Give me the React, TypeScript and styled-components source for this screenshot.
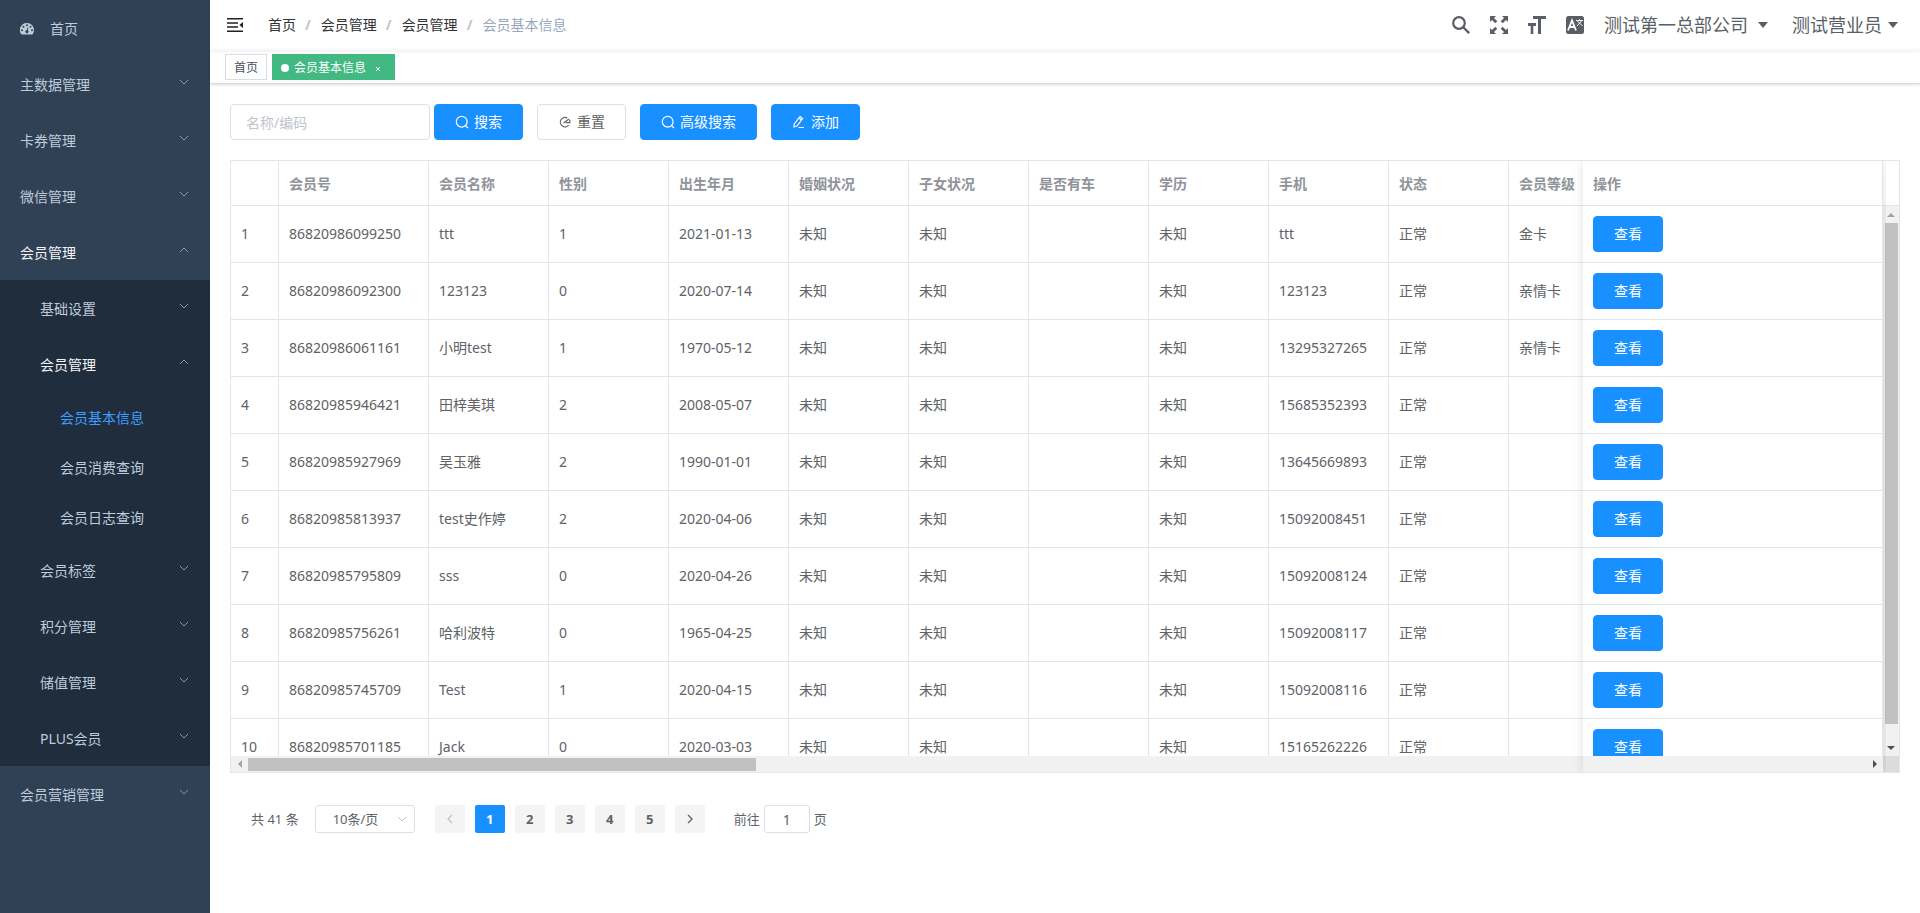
import React, { useRef } from "react";
import styled, { createGlobalStyle, css } from "styled-components";

const GlobalStyle = createGlobalStyle`
  *, *::before, *::after { box-sizing: border-box; }
  body {
    margin: 0;
    background: #fff;
    color: #606266;
    font-family: "Noto Sans", "Noto Sans CJK SC", sans-serif;
    font-size: 14px;
    line-height: 20px;
  }
  button, input, select { font: inherit; color: inherit; }
  a { color: inherit; text-decoration: none; }
`;

const Page = styled.div`
  display: flex;
  min-height: 100vh;
`;

/* ---------- sidebar ---------- */

const Sidebar = styled.nav`
  flex: 0 0 210px;
  background: #304156;
`;

const MenuList = styled.ul<{ $nested?: boolean }>`
  list-style: none;
  margin: 0;
  padding: 0;
  background: ${(p) => (p.$nested ? "#1f2d3d" : "transparent")};
`;

const MenuLink = styled.a<{ $depth: number; $open?: boolean; $active?: boolean }>`
  display: flex;
  align-items: center;
  justify-content: space-between;
  height: ${(p) => (p.$depth === 2 ? 50 : 56)}px;
  padding: 0 20px 0 ${(p) => 20 + p.$depth * 20}px;
  color: ${(p) => (p.$active ? "#409eff" : p.$open ? "#f4f4f5" : "#bfcbd9")};
`;

const MenuLabel = styled.span`
  display: flex;
  align-items: center;
  gap: 16px;
  padding-top: 2px;
`;

const Arrow = styled.svg<{ $up?: boolean }>`
  width: 10px;
  height: 6px;
  margin: 0 1px 4px;
  fill: none;
  stroke: #8c97a5;
  transform: ${(p) => (p.$up ? "rotate(180deg)" : "none")};
`;

const Chevron = ({ up }: { up?: boolean }) => (
  <Arrow $up={up} viewBox="0 0 10 6" aria-hidden="true">
    <path d="M1 1 L5 5 L9 1" />
  </Arrow>
);

/* ---------- top bars ---------- */

const Main = styled.main`
  flex: 1;
  min-width: 0;
`;

const Navbar = styled.header`
  display: flex;
  align-items: center;
  justify-content: space-between;
  height: 50px;
  padding: 0 22px 0 17px;
  box-shadow: 0 1px 4px rgba(0, 21, 41, 0.08);
`;

const NavGroup = styled.div`
  display: flex;
  align-items: center;
`;

const IconButton = styled.button`
  display: flex;
  padding: 0;
  border: 0;
  background: none;
  color: #5a5e66;
  cursor: pointer;
  svg { fill: currentColor; }
`;

const Breadcrumb = styled.ol`
  display: flex;
  list-style: none;
  margin: 0 0 0 25px;
  padding: 0;
  color: #303133;
  li + li::before {
    content: "/";
    margin: 0 10px 0 9px;
    font-weight: 700;
    color: #c0c4cc;
  }
  li:last-child { color: #97a8be; }
`;

const Tools = styled.div`
  display: flex;
  align-items: center;
  gap: 20px;
`;

const AccountButton = styled.button`
  display: flex;
  align-items: center;
  gap: 10px;
  padding: 0;
  border: 0;
  background: none;
  color: #5a5e66;
  font-size: 18px;
  line-height: 26px;
  cursor: pointer;
  & + & { margin-left: 4px; gap: 6px; }
`;

const Caret = styled.span`
  border: 5px solid transparent;
  border-top: 6px solid #5a5e66;
  border-bottom: 0;
`;

const TagsBar = styled.div`
  display: flex;
  gap: 5px;
  height: 34px;
  padding: 4px 15px 0;
  border-bottom: 1px solid #d8dce5;
  box-shadow: 0 1px 3px rgba(0, 0, 0, 0.12), 0 0 3px rgba(0, 0, 0, 0.04);
`;

const Tag = styled.a<{ $active?: boolean }>`
  display: flex;
  align-items: center;
  height: 26px;
  padding: 2px 8px 0;
  border: 1px solid #d8dce5;
  font-size: 12px;
  color: #495060;
  ${(p) =>
    p.$active &&
    css`
      color: #fff;
      background: #42b983;
      border-color: #42b983;
    `}
`;

const Dot = styled.span`
  width: 8px;
  height: 8px;
  margin-right: 5px;
  border-radius: 50%;
  background: #fff;
`;

const CloseButton = styled.button`
  display: flex;
  padding: 5px;
  margin: 2px 0 0 4px;
  border: 0;
  background: none;
  svg { stroke: #fff; }
`;

/* ---------- content ---------- */

const Content = styled.div`
  padding: 20px;
`;

const Toolbar = styled.form`
  display: flex;
  gap: 14px;
  margin-bottom: 20px;
`;

const SearchGroup = styled.div`
  display: flex;
  gap: 4px;
`;

const SearchInput = styled.input`
  width: 200px;
  height: 36px;
  padding: 0 15px;
  border: 1px solid #dcdfe6;
  border-radius: 4px;
  &::placeholder { color: #c0c4cc; }
`;

const Button = styled.button<{ $plain?: boolean }>`
  display: flex;
  align-items: center;
  justify-content: center;
  gap: 5px;
  height: 36px;
  padding: 0 20px;
  border: 1px solid ${(p) => (p.$plain ? "#dcdfe6" : "#1890ff")};
  border-radius: 4px;
  background: ${(p) => (p.$plain ? "#fff" : "#1890ff")};
  color: ${(p) => (p.$plain ? "#606266" : "#fff")};
  cursor: pointer;
  svg { fill: none; stroke: currentColor; stroke-width: 1.2; }
`;

const TableFrame = styled.div`
  position: relative;
  display: grid;
  grid-template-columns: minmax(0, 1fr) 16px;
  grid-template-rows: 45px calc(100vh - 363px) 16px;
  border: 1px solid #dfe6ec;
`;

const TableScroll = styled.div`
  grid-row: 1 / 3;
  overflow: auto;
  scrollbar-width: none;
`;

const DataTable = styled.table`
  table-layout: fixed;
  width: 100%;
  min-width: 1698px;
  border-collapse: separate;
  border-spacing: 0;
`;

const cell = css`
  padding: 0 10px;
  border-right: 1px solid #dfe6ec;
  border-bottom: 1px solid #dfe6ec;
  background: #fff;
  text-align: left;
  white-space: nowrap;
`;

const HeadCell = styled.th<{ $fixed?: boolean }>`
  ${cell}
  position: sticky;
  top: 0;
  ${(p) => p.$fixed && "right: 0;"}
  z-index: ${(p) => (p.$fixed ? 4 : 1)};
  height: 45px;
  padding-top: 2px;
  font-weight: 700;
  color: #909399;
`;

const Cell = styled.td<{ $fixed?: boolean }>`
  ${cell}
  height: 57px;
  ${(p) =>
    p.$fixed &&
    css`
      position: sticky;
      right: 0;
    `}
`;

const FixedShadow = styled.div`
  position: absolute;
  z-index: 3;
  top: 0;
  bottom: 0;
  right: 16px;
  width: 300px;
  box-shadow: 0 0 10px rgba(0, 0, 0, 0.12);
  clip-path: inset(0 -3px 0 -12px);
  pointer-events: none;
`;

const Gutter = styled.div`
  border-bottom: 1px solid #dfe6ec;
`;

const ScrollBar = styled.div<{ $vertical?: boolean }>`
  display: flex;
  flex-direction: ${(p) => (p.$vertical ? "column" : "row")};
  background: #f1f1f1;
`;

const ScrollArrow = styled.button`
  display: flex;
  flex: 0 0 17px;
  align-items: center;
  justify-content: center;
  padding: 0;
  border: 0;
  background: none;
`;

const Track = styled.div`
  flex: 1;
  min-height: 0;
`;

const Thumb = styled.div<{ $vertical?: boolean; $share: number }>`
  background: #c1c1c1;
  ${(p) =>
    p.$vertical
      ? css`height: ${p.$share}%; margin: 0 1px 0 2px;`
      : css`width: ${p.$share}%; height: 13px; margin-top: 2px;`}
`;

const Corner = styled.div`
  background: #dcdcdc;
`;

/* ---------- pagination ---------- */

const Pager = styled.div`
  display: flex;
  align-items: center;
  padding: 32px 21px;
  font-size: 13px;
`;

const SizeSelect = styled.span`
  display: flex;
  align-items: center;
  width: 100px;
  margin: 0 20px 0 16px;
  svg { flex: none; margin: 0 0 0 -18px; stroke: #c0c4cc; pointer-events: none; }
  select {
    appearance: none;
    flex: none;
    width: 100px;
    height: 28px;
    padding: 0 25px 0 17px;
    border: 1px solid #dcdfe6;
    border-radius: 3px;
    background: #fff;
  }
`;

const PageList = styled.div`
  display: flex;
  gap: 10px;
`;

const PageButton = styled.button<{ $active?: boolean }>`
  display: flex;
  align-items: center;
  justify-content: center;
  width: 30px;
  height: 28px;
  padding: 0;
  border: 0;
  border-radius: 2px;
  font-weight: 700;
  background: ${(p) => (p.$active ? "#1890ff" : "#f4f4f5")};
  color: ${(p) => (p.$active ? "#fff" : "#606266")};
  &:disabled { color: #c0c4cc; }
  svg { fill: none; stroke: currentColor; }
`;

const Jumper = styled.label`
  display: flex;
  align-items: center;
  gap: 4px;
  margin-left: 29px;
  input {
    width: 46px;
    height: 28px;
    padding: 0;
    border: 1px solid #dcdfe6;
    border-radius: 3px;
    font-size: 14px;
    text-align: center;
  }
`;

/* ---------- icons ---------- */

const DashboardIcon = () => (
  <svg width="14" height="12" viewBox="0 0 14 12" aria-hidden="true">
    <path
      fill="#bfcbd9"
      fillRule="evenodd"
      d="M7 0a7 7 0 0 1 7 7c0 1.5-.4 2.9-1.2 4.1-.2.3-.4.4-.7.4H1.9c-.3 0-.5-.1-.7-.4A7 7 0 0 1 7 0ZM7 1.2a1 1 0 1 0 0 2 1 1 0 0 0 0-2ZM3.5 2.7a1 1 0 1 0 0 2 1 1 0 0 0 0-2ZM2 6.2a1 1 0 1 0 0 2 1 1 0 0 0 0-2ZM12 6.2a1 1 0 1 0 0 2 1 1 0 0 0 0-2ZM10.5 2.7a1 1 0 1 0 0 2 1 1 0 0 0 0-2ZM7.5 4.5 6.8 7.3a1.5 1.5 0 1 0 1 .3L8.4 4.8Z"
    />
  </svg>
);

const FoldIcon = () => (
  <svg width="16" height="14" viewBox="0 0 16 14" aria-hidden="true">
    <path fill="#222" d="M0 0H16V1.5H0ZM0 4.2H11V5.7H0ZM0 8.2H11V9.7H0ZM0 12.5H16V14H0ZM16 4V10L12.4 7Z" />
  </svg>
);

const SearchIcon = () => (
  <svg width="18" height="18" viewBox="0 0 18 18" aria-hidden="true">
    <circle cx="7" cy="7" r="5.8" fill="none" stroke="currentColor" strokeWidth="2.2" />
    <path d="M10.5 12 12 10.5 18 16.3 16.3 18Z" />
  </svg>
);

const FullscreenIcon = () => (
  <svg width="18" height="18" viewBox="0 0 18 18" aria-hidden="true">
    <path d="M0 0H6L4 2 7.3 5.3 5.3 7.3 2 4 0 6ZM18 0V6L16 4 12.7 7.3 10.7 5.3 14 2 12 0ZM0 18V12L2 14 5.3 10.7 7.3 12.7 4 16 6 18ZM18 18H12L14 16 10.7 12.7 12.7 10.7 16 14 18 12Z" />
  </svg>
);

const SizeIcon = () => (
  <svg width="18" height="18" viewBox="0 0 18 18" aria-hidden="true">
    <path d="M5 0H18V3H13V18H10V3H5ZM0 7H8V10H5.3V18H2.7V10H0Z" />
  </svg>
);

const LanguageIcon = () => (
  <svg width="18" height="18" viewBox="0 0 18 18" aria-hidden="true">
    <rect width="18" height="18" rx="2.5" />
    <path d="M2 14.5 6 4.5 10 14.5M3.5 11H8.5" fill="none" stroke="#fff" strokeWidth="1.8" />
    <path d="M10 4.5H17M13.5 3.2V4.5M11 10 15.5 5M11.5 5 16.5 10" fill="none" stroke="#fff" strokeWidth="0.9" />
  </svg>
);

const SmallSearchIcon = () => (
  <svg width="14" height="14" viewBox="0 0 14 14" aria-hidden="true">
    <circle cx="6.7" cy="6.7" r="5.4" />
    <path d="M10.4 10.4 13 13" />
  </svg>
);

const ResetIcon = () => (
  <svg width="14" height="14" viewBox="0 0 14 14" aria-hidden="true">
    <path d="M10.8 10A4.7 4.7 0 1 1 9.2 3M5.6 8 11 4M7.8 7.6H11.8V4.8" />
  </svg>
);

const EditIcon = () => (
  <svg width="14" height="14" viewBox="0 0 14 14" aria-hidden="true">
    <path d="M8 1.5 10.5 3.5 5 11 2 12 2.3 9ZM7 3 9.5 5M6.5 12.5H12" />
  </svg>
);

const PageArrow = ({ next }: { next?: boolean }) => (
  <svg width="8" height="12" viewBox="0 0 8 12" aria-hidden="true">
    <path d={next ? "M2 2 6 6 2 10" : "M6 2 2 6 6 10"} strokeWidth="1.3" />
  </svg>
);

const Triangle = ({ points, muted }: { points: string; muted?: boolean }) => (
  <svg width="8" height="8" viewBox="0 0 8 8" aria-hidden="true">
    <polygon points={points} fill={muted ? "#a3a3a3" : "#505050"} />
  </svg>
);

/* ---------- data ---------- */

type MenuEntry = { label: string; active?: boolean; icon?: boolean; children?: MenuEntry[]; leaf?: boolean };

const menu: MenuEntry[] = [
  { label: "首页", icon: true, leaf: true },
  { label: "主数据管理" },
  { label: "卡券管理" },
  { label: "微信管理" },
  {
    label: "会员管理",
    children: [
      { label: "基础设置" },
      {
        label: "会员管理",
        children: [
          { label: "会员基本信息", active: true, leaf: true },
          { label: "会员消费查询", leaf: true },
          { label: "会员日志查询", leaf: true },
        ],
      },
      { label: "会员标签" },
      { label: "积分管理" },
      { label: "储值管理" },
      { label: "PLUS会员" },
    ],
  },
  { label: "会员营销管理" },
];

const columns = ["会员号", "会员名称", "性别", "出生年月", "婚姻状况", "子女状况", "是否有车", "学历", "手机", "状态", "会员等级"];

const members: [string, string, string, string, string, string][] = [
  ["86820986099250", "ttt", "1", "2021-01-13", "ttt", "金卡"],
  ["86820986092300", "123123", "0", "2020-07-14", "123123", "亲情卡"],
  ["86820986061161", "小明test", "1", "1970-05-12", "13295327265", "亲情卡"],
  ["86820985946421", "田梓美琪", "2", "2008-05-07", "15685352393", ""],
  ["86820985927969", "吴玉雅", "2", "1990-01-01", "13645669893", ""],
  ["86820985813937", "test史作婷", "2", "2020-04-06", "15092008451", ""],
  ["86820985795809", "sss", "0", "2020-04-26", "15092008124", ""],
  ["86820985756261", "哈利波特", "0", "1965-04-25", "15092008117", ""],
  ["86820985745709", "Test", "1", "2020-04-15", "15092008116", ""],
  ["86820985701185", "Jack", "0", "2020-03-03", "15165262226", ""],
];

const Menu = ({ entries, depth = 0 }: { entries: MenuEntry[]; depth?: number }) => (
  <MenuList $nested={depth > 0}>
    {entries.map((entry) => (
      <li key={entry.label}>
        <MenuLink href="#" $depth={depth} $open={!!entry.children} $active={entry.active}>
          <MenuLabel>
            {entry.icon && <DashboardIcon />}
            {entry.label}
          </MenuLabel>
          {!entry.leaf && <Chevron up={!!entry.children} />}
        </MenuLink>
        {entry.children && <Menu entries={entry.children} depth={depth + 1} />}
      </li>
    ))}
  </MenuList>
);

const Col = styled.col<{ $width: number }>`
  width: ${(p) => p.$width}px;
`;

const MemberTable = () => {
  const area = useRef<HTMLDivElement>(null);
  const scroll = (left: number, top: number) => area.current?.scrollBy({ left, top });

  return (
    <TableFrame>
      <TableScroll ref={area}>
        <DataTable>
          <colgroup>
            <Col $width={48} />
            <Col $width={150} />
            {columns.slice(1).map((name) => (
              <Col key={name} $width={120} />
            ))}
            <Col $width={300} />
          </colgroup>
          <thead>
            <tr>
              <HeadCell />
              {columns.map((name) => (
                <HeadCell key={name} scope="col">{name}</HeadCell>
              ))}
              <HeadCell $fixed scope="col">操作</HeadCell>
            </tr>
          </thead>
          <tbody>
            {members.map(([id, name, gender, birth, phone, level], i) => (
              <tr key={id}>
                {[i + 1, id, name, gender, birth, "未知", "未知", "", "未知", phone, "正常", level].map((value, n) => (
                  <Cell key={n}>{value}</Cell>
                ))}
                <Cell $fixed>
                  <Button type="button">查看</Button>
                </Cell>
              </tr>
            ))}
          </tbody>
        </DataTable>
      </TableScroll>
      <Gutter />
      <ScrollBar $vertical>
        <ScrollArrow type="button" aria-label="向上滚动" onClick={() => scroll(0, -57)}>
          <Triangle muted points="0,6 4,2 8,6" />
        </ScrollArrow>
        <Track><Thumb $vertical $share={97} /></Track>
        <ScrollArrow type="button" aria-label="向下滚动" onClick={() => scroll(0, 57)}>
          <Triangle points="0,2 8,2 4,6" />
        </ScrollArrow>
      </ScrollBar>
      <ScrollBar>
        <ScrollArrow type="button" aria-label="向左滚动" onClick={() => scroll(-120, 0)}>
          <Triangle muted points="6,0 2,4 6,8" />
        </ScrollArrow>
        <Track><Thumb $share={31.4} /></Track>
        <ScrollArrow type="button" aria-label="向右滚动" onClick={() => scroll(120, 0)}>
          <Triangle points="2,0 6,4 2,8" />
        </ScrollArrow>
      </ScrollBar>
      <Corner />
      <FixedShadow />
    </TableFrame>
  );
};

export default function App() {
  return (
    <>
      <GlobalStyle />
      <Page>
        <Sidebar><Menu entries={menu} /></Sidebar>
        <Main>
          <Navbar>
            <NavGroup>
              <IconButton type="button" aria-label="收起菜单"><FoldIcon /></IconButton>
              <Breadcrumb>
                <li><a href="#">首页</a></li>
                <li><a href="#">会员管理</a></li>
                <li><a href="#">会员管理</a></li>
                <li>会员基本信息</li>
              </Breadcrumb>
            </NavGroup>
            <Tools>
              <IconButton type="button" aria-label="搜索"><SearchIcon /></IconButton>
              <IconButton type="button" aria-label="全屏"><FullscreenIcon /></IconButton>
              <IconButton type="button" aria-label="字号"><SizeIcon /></IconButton>
              <IconButton type="button" aria-label="语言"><LanguageIcon /></IconButton>
              <AccountButton type="button">测试第一总部公司<Caret /></AccountButton>
              <AccountButton type="button">测试营业员<Caret /></AccountButton>
            </Tools>
          </Navbar>
          <TagsBar>
            <Tag href="#">首页</Tag>
            <Tag as="div" $active>
              <Dot />
              会员基本信息
              <CloseButton type="button" aria-label="关闭">
                <svg width="6" height="6" viewBox="0 0 6 6" aria-hidden="true"><path d="M1 1 5 5M5 1 1 5" /></svg>
              </CloseButton>
            </Tag>
          </TagsBar>
          <Content>
            <Toolbar onSubmit={(e) => e.preventDefault()}>
              <SearchGroup>
                <SearchInput type="text" placeholder="名称/编码" aria-label="名称/编码" />
                <Button type="submit"><SmallSearchIcon />搜索</Button>
              </SearchGroup>
              <Button type="reset" $plain><ResetIcon />重置</Button>
              <Button type="button"><SmallSearchIcon />高级搜索</Button>
              <Button type="button"><EditIcon />添加</Button>
            </Toolbar>
            <MemberTable />
            <Pager>
              <span>共 41 条</span>
              <SizeSelect>
                <select aria-label="每页条数" defaultValue="10">
                  <option value="10">10条/页</option>
                  <option value="20">20条/页</option>
                </select>
                <Chevron />
              </SizeSelect>
              <PageList>
                <PageButton type="button" disabled aria-label="上一页"><PageArrow /></PageButton>
                {[1, 2, 3, 4, 5].map((n) => (
                  <PageButton key={n} type="button" $active={n === 1}>{n}</PageButton>
                ))}
                <PageButton type="button" aria-label="下一页"><PageArrow next /></PageButton>
              </PageList>
              <Jumper>
                前往
                <input type="text" defaultValue="1" />
                页
              </Jumper>
            </Pager>
          </Content>
        </Main>
      </Page>
    </>
  );
}
